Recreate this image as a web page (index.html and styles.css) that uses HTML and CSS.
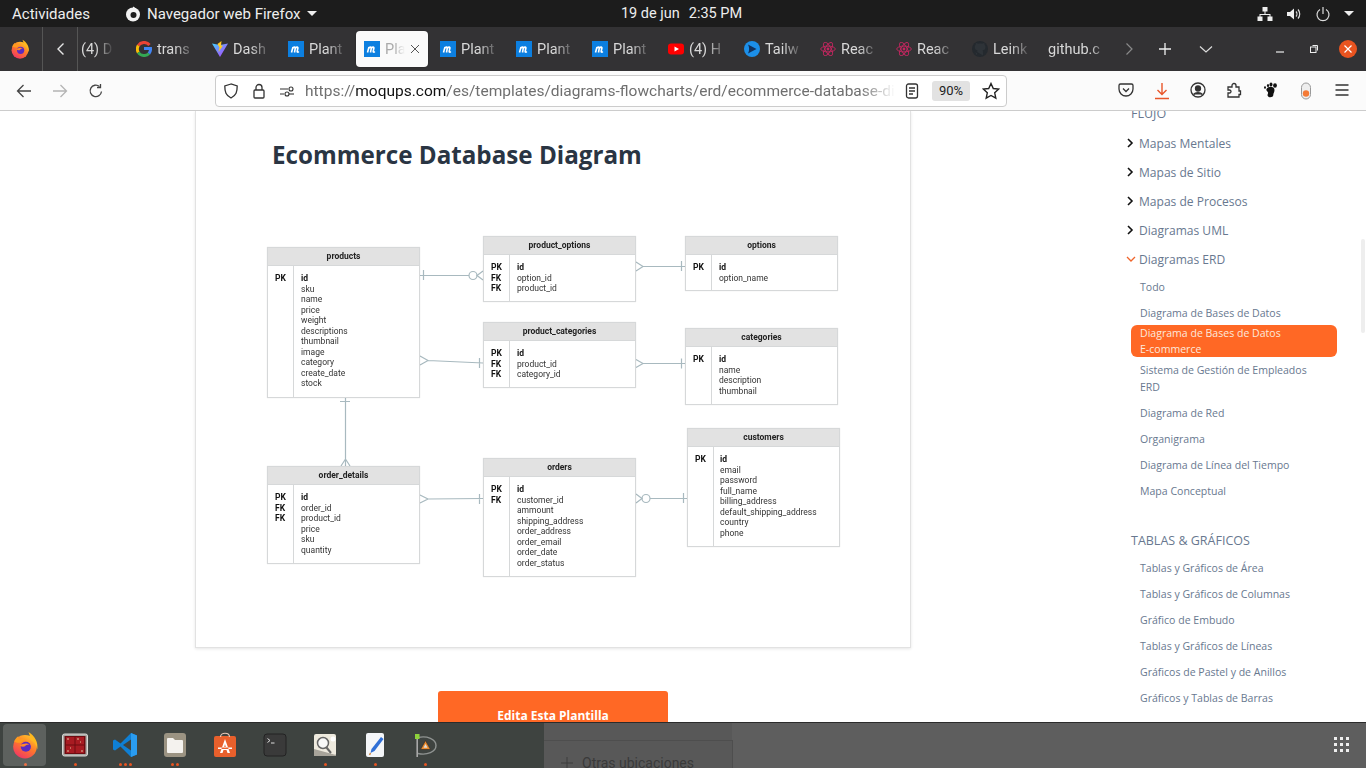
FILE: index.html
```html
<!DOCTYPE html>
<html lang="es">
<head>
<meta charset="utf-8">
<title>Ecommerce Database Diagram</title>
<link rel="stylesheet" href="styles.css">
</head>
<body>
<svg class="defs" width="0" height="0" aria-hidden="true">
  <defs>
    <linearGradient id="ffg" x1="0.8" y1="0" x2="0.2" y2="1"><stop offset="0" stop-color="#ffc928"/><stop offset=".45" stop-color="#ff7a2a"/><stop offset="1" stop-color="#f0306a"/></linearGradient>
    <linearGradient id="vite" x1="0" y1="0" x2="1" y2="1"><stop offset="0" stop-color="#41d1ff"/><stop offset="1" stop-color="#bd34fe"/></linearGradient>
    <symbol id="firefox" viewBox="0 0 32 32">
      <circle cx="16" cy="18" r="13.500" fill="url(#ffg)"/>
      <path d="M20 1c7 4 11.500 12 10 20-1-5-3.500-9-8-11 .5-3-1-6-2-9z" fill="#ffb91f"/>
      <path d="M3.500 12c1.500-3 3-5 5-6 0 2 1 3 2 3.500 2-1 5-1 7 .5-3 .5-5 1.500-6 3.500-3 0-6 0-8-1.500z" fill="#ff9a1f"/>
      <circle cx="17" cy="18" r="5.800" fill="#5a2bc2"/>
      <path d="M10 16.500c3-2 8-3.500 11-1-2-.5-4 .5-5 2-2 1-4 .5-6-1z" fill="#ff8a2a"/>
    </symbol>
    <symbol id="moqups" viewBox="0 0 16 16"><rect width="16" height="16" fill="#0c7fe0"/><path d="M3.500 11.500 5 6M5 7c1-1.200 2.500-1.200 2.300.2L6.500 11.500M7.600 7c1-1.200 2.500-1.200 2.300.2l-.7 3c-.2 1 .8 1.200 1.600.3" fill="none" stroke="#fff" stroke-width="1.600"/></symbol>
    <symbol id="react" viewBox="0 0 16 16"><g fill="none" stroke="#c2275f" stroke-width=".9"><ellipse cx="8" cy="8" rx="7.300" ry="2.900"/><ellipse cx="8" cy="8" rx="7.300" ry="2.900" transform="rotate(60 8 8)"/><ellipse cx="8" cy="8" rx="7.300" ry="2.900" transform="rotate(120 8 8)"/></g><circle cx="8" cy="8" r="1.400" fill="#c2275f"/></symbol>
  </defs>
</svg>

<header class="topbar">
  <div class="top-left">
    <span class="activities">Actividades</span>
    <span class="appmenu">
      <svg class="i16" viewBox="0 0 16 16"><circle cx="8" cy="8.500" r="7" fill="#f2f2f2"/><circle cx="8.500" cy="9" r="3" fill="#1c1c1c"/><path d="M8 0.500c2 1 3.500 2 4 4l-4 1z" fill="#f2f2f2"/></svg>
      <span>Navegador web Firefox</span>
      <svg class="caret" viewBox="0 0 10 5"><path d="M0 0h10L5 5z" fill="#eee"/></svg>
    </span>
  </div>
  <div class="clock"><span>19 de jun</span><span>2:35 PM</span></div>
  <div class="status">
    <svg class="i16" viewBox="0 0 16 16" fill="#eee"><rect x="5.500" y="1" width="5" height="4.500"/><rect x="0.500" y="10.500" width="5" height="4.500"/><rect x="10.500" y="10.500" width="5" height="4.500"/><path d="M7.500 5h1v3H13.500v3h-1V9h-9v2h-1V8h5z"/></svg>
    <svg class="i16" viewBox="0 0 16 16"><path d="M1 6h3l4-3.500v11L4 10H1z" fill="#eee"/><path d="M10 5.500c1.200 1.300 1.200 3.700 0 5M12 3.500c2.300 2.500 2.300 6.500 0 9" fill="none" stroke="#ddd" stroke-width="1.200"/></svg>
    <svg class="i16" viewBox="0 0 16 16" fill="none" stroke="#ddd" stroke-width="1.200"><path d="M5 3.500a6 6 0 1 0 6 0"/><path d="M8 1v7"/></svg>
    <svg class="caret" viewBox="0 0 10 5"><path d="M0 0h10L5 5z" fill="#eee"/></svg>
  </div>
</header>

<div class="tabbar">
  <div class="ff-cell"><svg class="i20" viewBox="0 0 32 32"><use href="#firefox"/></svg></div>
  <div class="back-cell"><svg class="i16" viewBox="0 0 16 16"><path d="M10.500 2.500 5 8l5.500 5.500" fill="none" stroke="#e6e6e6" stroke-width="1.400"/></svg></div>
  <div class="tab tab-first"><span class="tab-label">(4) D</span></div>
  <div class="tab">
    <svg class="i16" viewBox="0 0 16 16" fill="none" stroke-width="3"><path d="M13.500 4A7 7 0 0 0 2.300 4.500" stroke="#ea4335"/><path d="M2.300 4.500a7 7 0 0 0 0 7" stroke="#fbbc05"/><path d="M2.300 11.500A7 7 0 0 0 13 12.500" stroke="#34a853"/><path d="M13 12.500A7 7 0 0 0 14.500 7.500H8" stroke="#4285f4"/></svg>
    <span class="tab-label">trans</span>
  </div>
  <div class="tab">
    <svg class="i16" viewBox="0 0 16 16"><path d="M0 2.500 8 4l8-1.500L8 16z" fill="url(#vite)"/><path d="M9.500 0 5.500 3 7.500 6.500 6.500 11l4.500-6.500-2 .2z" fill="#ffc91f"/></svg>
    <span class="tab-label">Dash</span>
  </div>
  <div class="tab"><svg class="i16" viewBox="0 0 16 16"><use href="#moqups"/></svg><span class="tab-label">Plant</span></div>
  <div class="tab tab-active"><svg class="i16" viewBox="0 0 16 16"><use href="#moqups"/></svg><span class="tab-label">Pla</span><svg class="tab-x" viewBox="0 0 10 10"><path d="M1 1l8 8M9 1 1 9" stroke="#555" stroke-width="1" fill="none"/></svg></div>
  <div class="tab"><svg class="i16" viewBox="0 0 16 16"><use href="#moqups"/></svg><span class="tab-label">Plant</span></div>
  <div class="tab"><svg class="i16" viewBox="0 0 16 16"><use href="#moqups"/></svg><span class="tab-label">Plant</span></div>
  <div class="tab"><svg class="i16" viewBox="0 0 16 16"><use href="#moqups"/></svg><span class="tab-label">Plant</span></div>
  <div class="tab">
    <svg class="i16" viewBox="0 0 16 16"><rect y="2.500" width="16" height="11" rx="3" fill="#f00"/><path d="M6.500 5.500 11 8l-4.500 2.500z" fill="#fff"/></svg>
    <span class="tab-label">(4) H</span>
  </div>
  <div class="tab">
    <svg class="i16" viewBox="0 0 16 16"><circle cx="8" cy="8" r="8" fill="#1c8fe8"/><path d="M4 3.500 12.500 8 4 12.500c1.500-3 1.500-6 0-9z" fill="#12315c"/></svg>
    <span class="tab-label">Tailw</span>
  </div>
  <div class="tab"><svg class="i16" viewBox="0 0 16 16"><use href="#react"/></svg><span class="tab-label">Reac</span></div>
  <div class="tab"><svg class="i16" viewBox="0 0 16 16"><use href="#react"/></svg><span class="tab-label">Reac</span></div>
  <div class="tab">
    <svg class="i16" viewBox="0 0 16 16"><circle cx="8" cy="8" r="8" fill="#24292e"/><path d="M5 14.500v-2.500C3 12 3 10 2.500 10M11 14.500v-3c0-1 0-1.500-.5-2 2-.3 3-1.500 3-3.500 0-1-.3-1.700-1-2.300 0-.7 0-1.300-.3-1.700-.7 0-1.500.5-2 .8-1.300-.3-3-.3-4.200 0-.5-.3-1.300-.8-2-.8-.3.4-.3 1-.3 1.700-.7.6-1 1.300-1 2.300 0 2 1 3.200 3 3.500-.4.4-.5.9-.5 1.500" fill="#2e3338"/></svg>
    <span class="tab-label">Leink</span>
  </div>
  <div class="tab"><span class="tab-label tab-label-wide">github.c</span></div>
  <div class="tb-btn"><svg class="i16" viewBox="0 0 16 16"><path d="M5.500 2.500 11 8l-5.500 5.500" fill="none" stroke="#8a8a8a" stroke-width="1.200"/></svg></div>
  <div class="tb-btn tb-plus"><svg class="i16" viewBox="0 0 16 16"><path d="M8 2v12M2 8h12" stroke="#f0f0f0" stroke-width="1.300"/></svg></div>
  <div class="tb-btn tb-down"><svg class="i16" viewBox="0 0 16 16"><path d="M2 5.500 8 11l6-5.500" fill="none" stroke="#ddd" stroke-width="1.200"/></svg></div>
  <div class="tb-btn tb-min"><svg class="i10" viewBox="0 0 10 10"><path d="M1 8h8" stroke="#eee" stroke-width="1.200"/></svg></div>
  <div class="tb-btn tb-rest"><svg class="i10" viewBox="0 0 10 10" fill="none" stroke="#eee"><rect x="1.500" y="3" width="5.500" height="5.500"/><path d="M3.500 1.500h5v5"/></svg></div>
  <div class="win-close"><svg class="i10" viewBox="0 0 10 10"><path d="M1.500 1.500l7 7M8.500 1.500l-7 7" stroke="#fff" stroke-width="1.200"/></svg></div>
</div>

<nav class="navbar">
  <div class="nav-btn"><svg class="i16" viewBox="0 0 16 16" fill="none" stroke="#444" stroke-width="1.300"><path d="M15 8H1.500M7.500 2 1.500 8l6 6"/></svg></div>
  <div class="nav-btn"><svg class="i16" viewBox="0 0 16 16" fill="none" stroke="#b4b4b4" stroke-width="1.300"><path d="M1 8h13.500M8.500 2l6 6-6 6"/></svg></div>
  <div class="nav-btn"><svg class="i16" viewBox="0 0 16 16" fill="none" stroke="#444" stroke-width="1.300"><path d="M13.500 8.500A5.700 5.700 0 1 1 11.500 3.500"/><path d="M12.500 1v3.500H9"/></svg></div>
  <div class="urlbar">
    <svg class="i16" viewBox="0 0 16 16" fill="none" stroke="#333" stroke-width="1.300"><path d="M8 1 1.800 3c0 6 1 9.500 6.200 12 5.200-2.500 6.200-6 6.200-12z"/></svg>
    <svg class="i16" viewBox="0 0 16 16" fill="none" stroke="#333" stroke-width="1.300"><rect x="3" y="7" width="10" height="8" rx="1"/><path d="M5 7V4.500a3 3 0 0 1 6 0V7"/></svg>
    <svg class="i16" viewBox="0 0 16 16" fill="none" stroke="#333" stroke-width="1.100"><path d="M1 6h8M1 11h4"/><circle cx="12" cy="6" r="2"/><circle cx="8" cy="11" r="2"/><path d="M10 11h5"/></svg>
    <span class="url-text">https://<b>moqups.com</b>/es/templates/diagrams-flowcharts/erd/ecommerce-database-di</span>
    <svg class="i16 url-reader" viewBox="0 0 16 16" fill="none" stroke="#333" stroke-width="1.300"><rect x="2.500" y="1" width="11" height="14" rx="2"/><path d="M5 5h6M5 8h6M5 11h4"/></svg>
    <span class="zoom">90%</span>
    <svg class="i18 url-star" viewBox="0 0 18 18" fill="none" stroke="#222" stroke-width="1.400"><path d="M9 1.500l2.300 5 5.400.6-4 3.700 1.100 5.400L9 13.500l-4.800 2.700 1.100-5.400-4-3.700 5.400-.6z"/></svg>
  </div>
  <div class="tools">
    <div class="nav-btn"><svg class="i16" viewBox="0 0 16 16" fill="none" stroke="#333" stroke-width="1.300"><path d="M2.500 2h11A1.500 1.500 0 0 1 15 3.500V7a7 7 0 0 1-14 0V3.500A1.500 1.500 0 0 1 2.500 2z"/><path d="M5 6.500 8 9.500l3-3"/></svg></div>
    <div class="nav-btn"><svg class="i18" viewBox="0 0 18 18" fill="none" stroke="#e8562a" stroke-width="1.400"><path d="M9 1v11M4.500 8 9 12.500 13.500 8M2 16.500h14"/></svg></div>
    <div class="nav-btn"><svg class="i16" viewBox="0 0 16 16" fill="none" stroke="#333" stroke-width="1.300"><circle cx="8" cy="8" r="7"/><circle cx="8" cy="6.500" r="2.500" fill="#333"/><path d="M3.500 12.500c2-2.500 7-2.500 9 0" fill="#333"/></svg></div>
    <div class="nav-btn"><svg class="i16" viewBox="0 0 16 16" fill="none" stroke="#333" stroke-width="1.300"><path d="M2 5h4V3.500a2 2 0 0 1 4 0V5h3v4h1.500v3.500H13V15H2V11h1.500a1.500 1.500 0 0 0 0-3H2z"/></svg></div>
    <div class="nav-btn"><svg class="i16" viewBox="0 0 16 16" fill="#111"><path d="M4.500 7c2-3.500 8-2.500 8 1 0 2.500-1.200 3-1.200 5 0 2.500-4.500 3-5.500 1-1-1.500 1-2.500 0-4-.5-1-1.800-1.500-1.300-3z"/><ellipse cx="13" cy="3.500" rx="1.900" ry="2.300"/><ellipse cx="9" cy="2.500" rx="1.500" ry="2"/><ellipse cx="6" cy="3.500" rx="1.100" ry="1.500"/><ellipse cx="3" cy="5.500" rx="1" ry="1.300"/></svg></div>
    <div class="nav-btn"><svg class="i18" viewBox="0 0 18 18"><rect x="4.500" y="1" width="9" height="16" rx="4.500" fill="#eee" stroke="#999"/><circle cx="9" cy="11.500" r="3.200" fill="#f47a36"/></svg></div>
    <div class="nav-btn"><svg class="i16" viewBox="0 0 16 16" fill="none" stroke="#333" stroke-width="1.300"><path d="M1.500 3h13M1.500 8h13M1.500 13h13"/></svg></div>
  </div>
</nav>

<main class="main">
  <div class="content">
    <section class="card">
      <h1 class="card-title">Ecommerce Database Diagram</h1>
      <div class="diagram">
        <svg class="links" viewBox="196 190 714 456" fill="none" stroke="#a8b9bf" stroke-width="1.200">
          <path d="M420 275.500H469M423.500 270v10M483 271l-6 4.500 6 4.500"/><circle cx="473" cy="275.500" r="4"/>
          <path d="M428 360.500 483 363M479.500 358v10M420 356l8 4.500-8 4.500"/>
          <path d="M643 266.500H685M681.500 261v10M636 262l7 4.500-7 4.500"/>
          <path d="M643 363.500H685M681.500 358.500v10M636 359.500l7 4-7 4"/>
          <path d="M345.500 397V466M340 401.500h10M341 466l4.500-7 4.500 7"/>
          <path d="M428 499 483 498.500M479.500 494v10M420 495l8 4-8 4"/>
          <path d="M650 498.500H687M683.500 493v10M636 494l6 4.500-6 4.500"/><circle cx="646" cy="498.500" r="4"/>
        </svg>

        <div class="erd erd-products">
          <div class="erd-head">products</div>
          <div class="erd-body"><div class="erd-keys"><b>PK</b></div><div class="erd-cols"><b>id</b><span>sku</span><span>name</span><span>price</span><span>weight</span><span>descriptions</span><span>thumbnail</span><span>image</span><span>category</span><span>create_date</span><span>stock</span></div></div>
        </div>
        <div class="erd erd-poptions">
          <div class="erd-head">product_options</div>
          <div class="erd-body"><div class="erd-keys"><b>PK</b><b>FK</b><b>FK</b></div><div class="erd-cols"><b>id</b><span>option_id</span><span>product_id</span></div></div>
        </div>
        <div class="erd erd-options">
          <div class="erd-head">options</div>
          <div class="erd-body"><div class="erd-keys"><b>PK</b></div><div class="erd-cols"><b>id</b><span>option_name</span></div></div>
        </div>
        <div class="erd erd-pcats">
          <div class="erd-head">product_categories</div>
          <div class="erd-body"><div class="erd-keys"><b>PK</b><b>FK</b><b>FK</b></div><div class="erd-cols"><b>id</b><span>product_id</span><span>category_id</span></div></div>
        </div>
        <div class="erd erd-cats">
          <div class="erd-head">categories</div>
          <div class="erd-body"><div class="erd-keys"><b>PK</b></div><div class="erd-cols"><b>id</b><span>name</span><span>description</span><span>thumbnail</span></div></div>
        </div>
        <div class="erd erd-details">
          <div class="erd-head">order_details</div>
          <div class="erd-body"><div class="erd-keys"><b>PK</b><b>FK</b><b>FK</b></div><div class="erd-cols"><b>id</b><span>order_id</span><span>product_id</span><span>price</span><span>sku</span><span>quantity</span></div></div>
        </div>
        <div class="erd erd-orders">
          <div class="erd-head">orders</div>
          <div class="erd-body"><div class="erd-keys"><b>PK</b><b>FK</b></div><div class="erd-cols"><b>id</b><span>customer_id</span><span>ammount</span><span>shipping_address</span><span>order_address</span><span>order_email</span><span>order_date</span><span>order_status</span></div></div>
        </div>
        <div class="erd erd-customers">
          <div class="erd-head">customers</div>
          <div class="erd-body"><div class="erd-keys"><b>PK</b></div><div class="erd-cols"><b>id</b><span>email</span><span>password</span><span>full_name</span><span>billing_address</span><span>default_shipping_address</span><span>country</span><span>phone</span></div></div>
        </div>
      </div>
    </section>
    <a class="cta">Edita Esta Plantilla</a>
  </div>

  <aside class="sidebar">
    <div class="side-head">FLUJO</div>
    <div class="side-row"><svg class="chev" viewBox="0 0 8 10"><path d="M2 1l4 4-4 4" /></svg>Mapas Mentales</div>
    <div class="side-row"><svg class="chev" viewBox="0 0 8 10"><path d="M2 1l4 4-4 4" /></svg>Mapas de Sitio</div>
    <div class="side-row"><svg class="chev" viewBox="0 0 8 10"><path d="M2 1l4 4-4 4" /></svg>Mapas de Procesos</div>
    <div class="side-row"><svg class="chev" viewBox="0 0 8 10"><path d="M2 1l4 4-4 4" /></svg>Diagramas UML</div>
    <div class="side-row"><svg class="chev chev-open" viewBox="0 0 10 8"><path d="M1 2l4 4 4-4" /></svg>Diagramas ERD</div>
    <div class="side-item">Todo</div>
    <div class="side-item">Diagrama de Bases de Datos</div>
    <div class="side-item side-active">Diagrama de Bases de Datos <span class="nowrap">E-commerce</span></div>
    <div class="side-item">Sistema de Gestión de Empleados ERD</div>
    <div class="side-item">Diagrama de Red</div>
    <div class="side-item">Organigrama</div>
    <div class="side-item">Diagrama de Línea del Tiempo</div>
    <div class="side-item">Mapa Conceptual</div>
    <div class="side-head side-head-gap">TABLAS &amp; GRÁFICOS</div>
    <div class="side-item">Tablas y Gráficos de Área</div>
    <div class="side-item">Tablas y Gráficos de Columnas</div>
    <div class="side-item">Gráfico de Embudo</div>
    <div class="side-item">Tablas y Gráficos de Líneas</div>
    <div class="side-item">Gráficos de Pastel y de Anillos</div>
    <div class="side-item">Gráficos y Tablas de Barras</div>
  </aside>
  <div class="page-scroll"></div>
</main>

<footer class="dock">
  <div class="behind"><svg class="i16" viewBox="0 0 16 16"><path d="M8 2v12M2 8h12" stroke="#3c3c3c"/></svg><span>Otras ubicaciones</span></div>
  <div class="dock-item dock-current">
    <svg class="dock-icon" viewBox="0 0 32 32"><use href="#firefox"/></svg><div class="dots"><i></i></div>
  </div>
  <div class="dock-item">
    <svg class="dock-icon" viewBox="0 0 28 28"><rect x="1.500" y="3" width="25" height="22" rx="2" fill="#a8a8a4" stroke="#d8d8d4"/><rect x="3.500" y="5" width="21" height="18" fill="#6e0c10"/><path d="M5 6h8.500v7.500H5zM14.500 6H23v7.500h-8.500zM5 14.500h8.500V22H5zM14.500 14.500H23V22h-8.500z" fill="#a81b22"/><path d="M6 8h2M16 8h2M6 20h2M20 20h2M9 17h1M19 11h1" stroke="#eeb" stroke-width=".8"/></svg><div class="dots"><i></i></div>
  </div>
  <div class="dock-item">
    <svg class="dock-icon" viewBox="0 0 28 28"><path d="M20 2 9.500 12.500 4 8.500 2 9.500v9l2 1 5.500-4L20 26l6-2.500V4.500z" fill="#0f7fd4"/><path d="M20 8.500 12 14l8 5.500z" fill="#3e4340"/><path d="M20 2l6 2.500v19L20 26z" fill="#2a9cf0"/></svg><div class="dots"><i></i><i></i><i></i></div>
  </div>
  <div class="dock-item">
    <svg class="dock-icon" viewBox="0 0 28 28"><rect x="3" y="2" width="22" height="24" rx="3" fill="#9b9382"/><path d="M6 8a1 1 0 0 1 1-1h5l2 2h7a1 1 0 0 1 1 1v11a1 1 0 0 1-1 1H7a1 1 0 0 1-1-1z" fill="#f4f2ee"/></svg><div class="dots"><i></i><i></i></div>
  </div>
  <div class="dock-item">
    <svg class="dock-icon" viewBox="0 0 28 28"><rect x="3" y="5" width="22" height="21" rx="2" fill="#e9602c"/><path d="M9.500 6c0-5 9-5 9 0" fill="none" stroke="#e8c9b8" stroke-width="1.200"/><path d="M14 8l-5 14h2.500l1-3h3l1 3H19L14 8zm0 5 1 4h-2z M7 16.500h14v1.500H7z" fill="#fff"/></svg><div class="dots"></div>
  </div>
  <div class="dock-item">
    <svg class="dock-icon" viewBox="0 0 28 28"><rect x="3" y="3" width="22" height="22" rx="3" fill="#3a3a3a" stroke="#222"/><path d="M6.500 7.500 9 9.500l-2.500 2M10 12h3.500" fill="none" stroke="#ddd"/></svg><div class="dots"></div>
  </div>
  <div class="dock-item">
    <svg class="dock-icon" viewBox="0 0 28 28"><rect x="3" y="3" width="22" height="22" rx="2" fill="#eeeade"/><path d="M3 18 25 24v1H3z" fill="#a8a49a"/><circle cx="12" cy="12" r="5.500" fill="#f8f8f8" stroke="#666" stroke-width="1.500"/><path d="M15.500 16.500 20 22" stroke="#666" stroke-width="2"/><circle cx="22" cy="8" r="2.500" fill="#fff"/></svg><div class="dots"><i></i></div>
  </div>
  <div class="dock-item">
    <svg class="dock-icon" viewBox="0 0 28 28"><rect x="5" y="2" width="18" height="24" rx="2" fill="#f4f6f8"/><path d="M20 6l2.500 2-9 12-4 2 1-4z" fill="#2f6fd6"/><path d="M9.500 22l-1 2" stroke="#d08a4a" stroke-width="1.500"/></svg><div class="dots"><i></i></div>
  </div>
  <div class="dock-item">
    <svg class="dock-icon" viewBox="0 0 28 28"><path d="M7 6.500C16 4.500 25 8 25 14.500S16 24.500 7 22.500" fill="none" stroke="#8f9391" stroke-width="1.400"/><path d="M6.200 3v23" stroke="#a8a8a8" stroke-width="1.600"/><rect x="4" y="3" width="4.500" height="5" fill="#8ed23a"/><path d="M14.500 9.500 19.500 18.500H9.500z" fill="#e98a2c" stroke="#2e2e2e" stroke-width=".7"/><path d="M14.500 13l2 3.800h-4z" fill="#ddd"/></svg><div class="dots"><i></i></div>
  </div>
  <div class="app-grid"><i></i><i></i><i></i><i></i><i></i><i></i><i></i><i></i><i></i></div>
</footer>
</body>
</html>
```
FILE: styles.css
```css
* { box-sizing: border-box; }
html, body { margin: 0; padding: 0; height: 100%; }
body {
  width: 1366px;
  height: 768px;
  overflow: hidden;
  display: flex;
  flex-direction: column;
  background: #fff;
  font-family: "Noto Sans", sans-serif;
}
.defs { position: absolute; }
svg { display: block; flex: none; }
.i10 { width: 10px; height: 10px; }
.i16 { width: 16px; height: 16px; }
.i18 { width: 18px; height: 18px; }
.i20 { width: 20px; height: 20px; }
.caret { width: 10px; height: 5px; }

/* top bar */
.topbar {
  flex: none;
  height: 27px;
  background: #1c1c1c;
  color: #eee;
  font-family: Roboto, sans-serif;
  font-size: 15px;
  display: grid;
  grid-template-columns: 1fr auto 1fr;
  align-items: center;
  padding: 0 15px 0 12px;
}
.top-left { display: flex; align-items: center; }
.activities { width: 113px; }
.appmenu { display: flex; align-items: center; gap: 6px; }
.clock { display: flex; gap: 9px; font-size: 14.5px; }
.status { display: flex; align-items: center; justify-content: flex-end; gap: 13px; margin-right: -3px; }

/* tab strip */
.tabbar {
  flex: none;
  height: 44px;
  background: #333234;
  display: flex;
  align-items: center;
  color: #d8d8d8;
  font-family: Roboto, sans-serif;
  font-size: 14.5px;
}
.ff-cell {
  width: 43px;
  height: 44px;
  padding-left: 10px;
  display: flex;
  align-items: center;
  border-right: 1px solid #555;
}
.back-cell {
  width: 35px;
  height: 44px;
  padding-left: 10px;
  display: flex;
  align-items: center;
  border-right: 1px solid #555;
}
.tab {
  width: 76px;
  height: 36px;
  padding: 0 8px;
  display: flex;
  align-items: center;
  gap: 5px;
  flex: none;
}
.tab-first { width: 50px; padding: 0 14px 0 3px; }
.tab-label {
  flex: 1;
  min-width: 0;
  overflow: hidden;
  white-space: nowrap;
  -webkit-mask-image: linear-gradient(to right, #000 45%, transparent 100%);
  mask-image: linear-gradient(to right, #000 45%, transparent 100%);
}
.tab-label-wide { -webkit-mask-image: linear-gradient(to right, #000 70%, transparent 100%); mask-image: linear-gradient(to right, #000 70%, transparent 100%); }
.tab-active {
  width: 72px;
  margin-right: 4px;
  background: #fafafa;
  border-radius: 4px;
  color: #aaa;
  box-shadow: 0 0 2px rgba(0,0,0,.4);
}
.tab-x { width: 10px; height: 10px; flex: none; }
.tb-btn { width: 26px; display: flex; justify-content: center; flex: none; }
.tb-plus { margin-left: 10px; }
.tb-down { margin-left: 15px; }
.tb-min { margin-left: 48px; }
.tb-rest { margin-left: 8px; }
.win-close {
  width: 18px;
  height: 18px;
  margin-left: 12px;
  border-radius: 50%;
  background: #e95420;
  display: flex;
  align-items: center;
  justify-content: center;
}

/* nav bar */
.navbar {
  flex: none;
  height: 40px;
  background: #fbfbfb;
  border-bottom: 1px solid #ccc;
  display: flex;
  align-items: center;
  padding: 1px 0 0 6px;
}
.nav-btn { width: 36px; display: flex; justify-content: center; flex: none; }
.urlbar {
  width: 792px;
  height: 32px;
  margin-left: 101px;
  background: #fff;
  border: 1px solid #ccc;
  border-radius: 4px;
  display: flex;
  align-items: center;
  gap: 12px;
  padding-left: 7px;
}
.url-text {
  flex: 1;
  min-width: 0;
  margin-left: -2px;
  color: #6f6f6f;
  font-family: Roboto, sans-serif;
  font-size: 15.5px;
  white-space: nowrap;
  overflow: hidden;
  -webkit-mask-image: linear-gradient(to right, #000 94%, transparent 100%);
  mask-image: linear-gradient(to right, #000 94%, transparent 100%);
}
.url-text b { font-weight: 400; color: #111; }
.url-reader { margin-left: -3px; }
.zoom {
  width: 38px;
  height: 20px;
  background: #e2e2e2;
  border-radius: 3px;
  color: #222;
  font-family: Roboto, sans-serif;
  font-size: 13px;
  line-height: 20px;
  text-align: center;
}
.url-star { margin: 0 6px 0 0; }
.tools { display: flex; margin-left: 101px; }

/* main */
.main {
  flex: 1;
  min-height: 0;
  position: relative;
  overflow: hidden;
  display: flex;
  padding-left: 195px;
}
.content {
  width: 716px;
  flex: none;
  display: flex;
  flex-direction: column;
  align-items: center;
}
.card {
  width: 716px;
  height: 537px;
  flex: none;
  border: 1px solid #e2e2e2;
  border-top: 0;
  box-shadow: 0 1px 3px rgba(0,0,0,.1);
  background: #fff;
}
.card-title {
  margin: 0;
  height: 79px;
  padding: 26px 0 0 76px;
  font-family: "Open Sans", sans-serif;
  font-size: 24.2px;
  font-weight: 700;
  line-height: 36px;
  color: #2a3543;
}
.cta {
  width: 230px;
  height: 48px;
  flex: none;
  margin-top: 43px;
  background: #ff6825;
  border-radius: 3px;
  color: #fff;
  font-family: "Open Sans", sans-serif;
  font-size: 12px;
  font-weight: 700;
  line-height: 49px;
  text-align: center;
}

/* ERD diagram: tables are nodes on a free canvas */
.diagram {
  position: relative;
  width: 714px;
  height: 456px;
  filter: blur(.4px);
  font-family: Roboto, sans-serif;
  font-size: 8.5px;
  color: #333;
}
.links { position: absolute; inset: 0; width: 714px; height: 456px; }
.erd {
  position: absolute;
  width: 153px;
  display: flex;
  flex-direction: column;
  background: #fff;
  border: 1px solid #d6d8d9;
  box-shadow: 0 0 1px rgba(0,0,0,.12);
}
.erd-head {
  height: 18px;
  flex: none;
  background: #e2e2e2;
  border-bottom: 1px solid #d6d8d9;
  color: #222;
  font-weight: 700;
  line-height: 17px;
  text-align: center;
}
.erd-body { flex: 1; display: flex; }
.erd-keys {
  width: 26px;
  flex: none;
  padding: 7px 0 0 7px;
  border-right: 1px solid #d6d8d9;
  display: flex;
  flex-direction: column;
  line-height: 10.5px;
  color: #111;
}
.erd-cols {
  padding: 7px 0 0 7px;
  display: flex;
  flex-direction: column;
  line-height: 10.5px;
}
.erd-cols b { color: #111; }
.erd-products { left: 71px; top: 57px; height: 151px; }
.erd-poptions { left: 287px; top: 46px; height: 66px; }
.erd-options { left: 489px; top: 46px; height: 55px; }
.erd-pcats { left: 287px; top: 132px; height: 66px; }
.erd-cats { left: 489px; top: 138px; height: 77px; }
.erd-details { left: 71px; top: 276px; height: 98px; }
.erd-orders { left: 287px; top: 268px; height: 119px; }
.erd-customers { left: 491px; top: 238px; height: 119px; }
.erd-customers .erd-cols { padding-left: 6px; }

/* sidebar */
.sidebar {
  width: 206px;
  flex: none;
  margin: -7px 0 0 220px;
  font-family: "Open Sans", sans-serif;
  color: #68788f;
}
.side-head { height: 20px; font-size: 12.5px; line-height: 20px; margin-bottom: 4.5px; }
.side-head-gap { margin: 27px 0 4px; }
.side-row {
  height: 29px;
  display: flex;
  align-items: center;
  font-size: 12.05px;
  line-height: 29px;
}
.chev {
  width: 8px;
  height: 10px;
  margin: 0 5px 0 -5px;
  fill: none;
  stroke: #111;
  stroke-width: 1.6;
}
.chev-open { width: 10px; height: 8px; margin: 0 3px 0 -5px; stroke: #f0642a; stroke-width: 1.3; }
.side-item {
  padding: 5.5px 9px 3.5px;
  font-size: 10.55px;
  line-height: 17px;
}
.side-active {
  margin-top: -1px;
  padding: 0 9px;
  line-height: 16px;
  background: #ff6825;
  border-radius: 6px;
  color: #fde9dd;
}
.nowrap { white-space: nowrap; }
.page-scroll {
  position: absolute;
  left: 1361px;
  top: 128px;
  width: 4px;
  height: 94px;
  background: #eee;
  border-radius: 2px;
}

/* dock */
.dock {
  flex: none;
  height: 46px;
  position: relative;
  display: flex;
  border-top: 1px solid #2b2b2b;
  background: linear-gradient(to right, #3e4340 0 544px, #585858 544px 732px, #5e5e5e 732px);
}
.behind {
  position: absolute;
  left: 544px;
  top: 17px;
  width: 189px;
  height: 28px;
  padding: 14px 0 0 15px;
  border-top: 1px solid #4e4e4e;
  border-right: 1px solid #4e4e4e;
  display: flex;
  gap: 7px;
  color: #3a3a3a;
  font-family: Roboto, sans-serif;
  font-size: 14px;
  line-height: 16px;
  overflow: hidden;
}
.dock-item {
  position: relative;
  width: 50px;
  height: 45px;
  flex: none;
  display: flex;
  flex-direction: column;
  align-items: center;
  padding-top: 8px;
}
.dock-icon { width: 28px; height: 28px; }
.dock-current::before {
  content: "";
  position: absolute;
  left: 3px;
  top: 1px;
  width: 43px;
  height: 42px;
  border-radius: 4px;
  background: rgba(255,255,255,.16);
}
.dock-current .dock-icon { position: relative; }
.dots {
  height: 3px;
  margin-top: 4px;
  display: flex;
  gap: 2px;
}
.dots i { width: 3px; height: 3px; border-radius: 50%; background: #e95420; }
.app-grid {
  position: absolute;
  right: 17px;
  top: 14px;
  display: grid;
  grid-template-columns: repeat(3, 3px);
  gap: 3px;
}
.app-grid i { width: 3px; height: 3px; background: #eee; }
```
